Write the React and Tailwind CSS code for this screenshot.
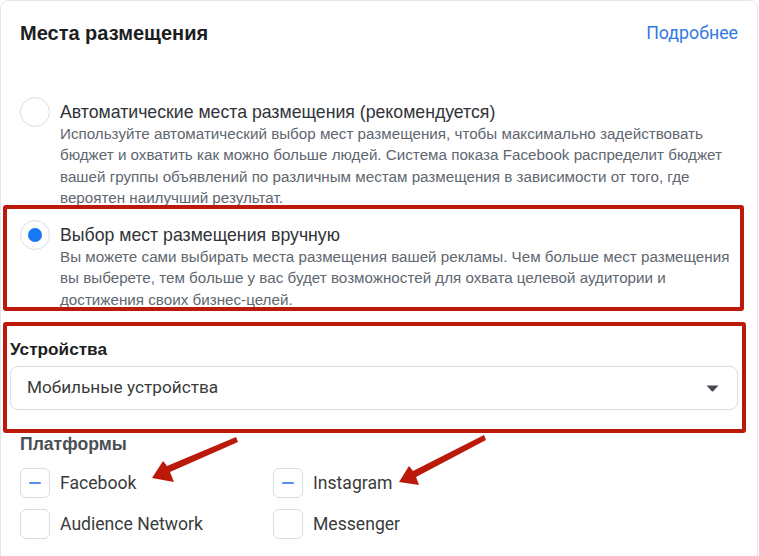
import React from "react";

const font = { fontFamily: '"Liberation Sans", Arial, sans-serif' };
const roboto = { fontFamily: 'Roboto, "Liberation Sans", Arial, sans-serif' };

function Radio({ checked }) {
    return (
        <span className="shrink-0 w-[30px] h-[30px] rounded-full border border-[#dadde1] bg-white flex items-center justify-center">
            {checked && <span className="w-[14px] h-[14px] rounded-full bg-[#1877f2]"></span>}
        </span>
    );
}

function Option({ checked, title, children }) {
    return (
        <div className="flex gap-[10px]">
            <Radio checked={checked} />
            <div className="shrink-0 flex flex-col pt-[4px] w-[670px]">
                <span className="text-[17.7px] leading-[22px] text-[#303338]">{title}</span>
                <span className="text-[15.2px] leading-[21.3px] text-[#606770]">{children}</span>
            </div>
        </div>
    );
}

function Check({ label, partial }) {
    return (
        <div className="flex items-center gap-[10px] w-[253px]">
            <span className="w-[30px] h-[30px] rounded-md border border-[#dadde1] bg-white flex items-center justify-center">
                {partial && <span className="w-[12px] h-[2px] rounded bg-[#5b8def]"></span>}
            </span>
            <span className="text-[17.6px] text-[#3a3b3c]" style={roboto}>{label}</span>
        </div>
    );
}

export default function App() {
    return (
        <div className="relative w-[759px] h-[556px] bg-white overflow-hidden" style={font}>
            <div className="w-[758px] h-[600px] rounded-t-lg border border-[#e4e6eb] px-[19px] pt-[20px] overflow-hidden">
                <div className="flex justify-between items-center h-[24px]">
                    <span className="text-[20px] font-bold text-[#1c1e21]">Места размещения</span>
                    <span className="text-[17.8px] text-[#3578e5]" style={roboto}>Подробнее</span>
                </div>

                <div className="mt-[52px] flex flex-col gap-[12px]">
                    <Option title="Автоматические места размещения (рекомендуется)">
                        Используйте автоматический выбор мест размещения, чтобы максимально задействовать бюджет и охватить как можно больше людей. Система показа Facebook распределит бюджет вашей группы объявлений по различным местам размещения в зависимости от того, где вероятен наилучший результат.
                    </Option>
                    <Option checked title="Выбор мест размещения вручную">
                        Вы можете сами выбирать места размещения вашей рекламы. Чем больше мест размещения вы выберете, тем больше у вас будет возможностей для охвата целевой аудитории и достижения своих бизнес-целей.
                    </Option>
                </div>

                <div className="mt-[29px] -ml-[10px]">
                    <div className="text-[17.2px] leading-[20px] font-bold text-[#1c1e21]">Устройства</div>
                    <div className="mt-[7px] h-[44px] rounded-lg border border-[#dadde1] flex items-center justify-between pl-[16px] pr-[18px]">
                        <span className="text-[17.2px] text-[#3a3b3c]" style={roboto}>Мобильные устройства</span>
                        <svg width="13" height="7" viewBox="0 0 13 7"><path d="M0.5 0.5h12L7.2 6.3q-0.7 0.6-1.4 0z" fill="#444950" /></svg>
                    </div>
                </div>

                <div className="mt-[24px] text-[17.6px] leading-[20px] font-bold text-[#4b4f56]">Платформы</div>
                <div className="mt-[14px] flex flex-col gap-[11px]">
                    <div className="flex">
                        <Check label="Facebook" partial />
                        <Check label="Instagram" partial />
                    </div>
                    <div className="flex">
                        <Check label="Audience Network" />
                        <Check label="Messenger" />
                    </div>
                </div>
            </div>

            <div className="absolute left-[3px] top-[205px] w-[741px] h-[106px] border-4 border-[#bb1a0b] rounded-[3px]"></div>
            <div className="absolute left-[3px] top-[322px] w-[743px] h-[111px] border-4 border-[#bb1a0b] rounded-[3px]"></div>
            <svg className="absolute left-0 top-0" width="759" height="556">
                <polygon points="152,478 163,461 167,466 236,437 238,442 170,472 174,482" fill="#bb1a0b" />
                <polygon points="399,482 409,466 413,471 484,435 486,440 416,477 419,485" fill="#bb1a0b" />
            </svg>
        </div>
    );
}
